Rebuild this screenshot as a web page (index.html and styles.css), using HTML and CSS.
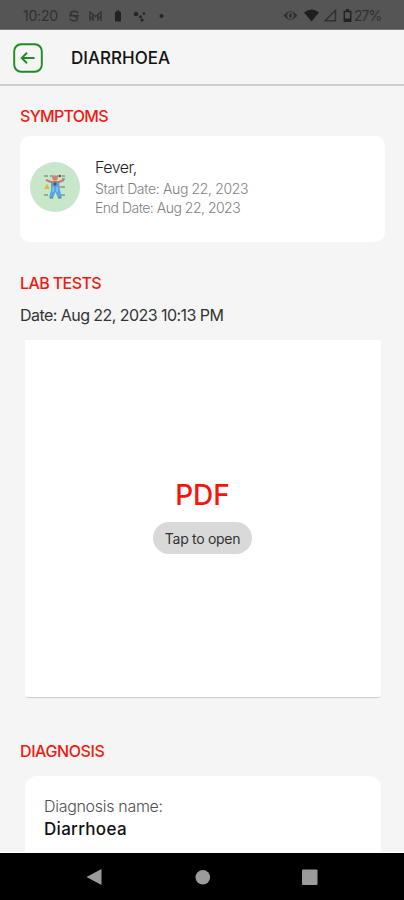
FILE: index.html
```html
<!DOCTYPE html>
<html lang="en">
<head>
<meta charset="utf-8">
<title>Diarrhoea</title>
<link rel="stylesheet" href="styles.css">
</head>
<body>
<div class="screen">
  <div class="status">
    <span class="time">10:20</span>
    <svg class="status-left" width="104" height="20" viewBox="66 6 104 20">
      <path d="M78 13.500C77.500 10.500 70.500 10.500 70.500 13.500C70.500 16.300 77.500 15.500 77.500 18.500C77.500 21.500 70.500 21.500 70 18.500M69 15.800H79" fill="none" stroke="#333" stroke-width="1.500"/>
      <path d="M90 21V12L95.500 16.500L101 12V21M93 21V15M98 21V15M90 16.500L93 19M101 16.500L98 19" fill="none" stroke="#353535" stroke-width="1.500"/>
      <path d="M116.500 10.500H119.500V12H121V21.500H115V12H116.500Z" fill="#222"/>
      <g fill="#252525"><circle cx="136" cy="14" r="2.300"/><circle cx="140.500" cy="16.800" r="1.500"/><circle cx="144" cy="13.500" r="1.200"/><circle cx="142" cy="20" r="1.600"/><circle cx="161.500" cy="16" r="2"/></g>
    </svg>
    <svg class="status-right" width="70" height="20" viewBox="282 6 70 20">
      <path d="M283.500 15.500Q290.500 7 297.500 15.500Q290.500 24 283.500 15.500Z" fill="#303030"/>
      <ellipse cx="290.500" cy="15.500" rx="3.300" ry="3.600" fill="#555"/><ellipse cx="290.500" cy="15.500" rx="1.300" ry="2.600" fill="#2b2b2b"/>
      <path d="M304 12.500Q311.500 6.500 319 12.500L311.500 21.500Z" fill="#1f1f1f"/>
      <path d="M325 20.800L335.500 10.500V20.800Z" fill="none" stroke="#303030" stroke-width="1.400"/>
      <path d="M344.300 11.500H350.700V21.200H344.300Z" fill="none" stroke="#222" stroke-width="1.500"/><path d="M346 9H349V11H346ZM344 18.500H351V21.500H344Z" fill="#222"/>
    </svg>
    <span class="battery">27%</span>
  </div>
  <header class="bar">
    <svg width="30" height="30" viewBox="0 0 30 30" fill="none" stroke="#1f8a24">
      <rect x="1.200" y="1.200" width="27.600" height="27.600" rx="7" stroke-width="1.900"/>
      <path d="M21.500 15H9M14 9.800L8.700 15L14 20.200" stroke-width="1.900"/>
    </svg>
    <h1>DIARRHOEA</h1>
  </header>
  <main>
    <h2 class="symptoms-title">SYMPTOMS</h2>
    <section class="card symptom">
      <div class="avatar">
        <svg width="24" height="26" viewBox="0 0 24 26">
          <path d="M8 7H16L17 16L19 24H15L12.500 18L10 24H6L8 16Z" fill="#5ba6df"/>
          <path d="M3 6L8 8L16 8L21 6" fill="none" stroke="#c97870" stroke-width="2"/>
          <circle cx="12" cy="4" r="2.800" fill="#dc7c70"/>
          <path d="M1 2H5M7 2H10M14 2H17M19 2H22M19 5H22M17 13H22M1 21H5M18 21H22M7 24H10M15 24H18" stroke="#61746b" stroke-width="1.200"/>
          <path d="M4 10L7 15H1Z" fill="#d7bd3c"/><circle cx="17" cy="2" r="1.200" fill="#b43242"/>
          <path d="M12 8L14 10L12 12L10 10Z" fill="#315aa0"/><path d="M10 13V18M14 13V18" stroke="#81c7ed" stroke-width="1.500"/>
        </svg>
      </div>
      <div>
        <p class="name">Fever,</p>
        <p class="date start">Start Date: Aug 22, 2023</p>
        <p class="date end">End Date: Aug 22, 2023</p>
      </div>
    </section>
    <h2 class="lab-title">LAB TESTS</h2>
    <p class="lab-date">Date: Aug 22, 2023 10:13 PM</p>
    <section class="pdf">
      <div class="pdf-label">PDF</div>
      <div class="open">Tap to open</div>
    </section>
    <h2 class="diagnosis-title">DIAGNOSIS</h2>
    <section class="card diagnosis">
      <p class="label">Diagnosis name:</p>
      <p class="value">Diarrhoea</p>
    </section>
  </main>
  <nav>
    <svg width="404" height="47" viewBox="0 853 404 47" fill="#9b9b9b">
      <path d="M86.500 877L101.500 869V885Z"/><circle cx="202.800" cy="877.300" r="7.300"/><rect x="302" y="869.500" width="15.500" height="15.500" rx="1"/>
    </svg>
  </nav>
</div>
</body>
</html>
```
FILE: styles.css
```css
* { box-sizing: border-box; margin: 0; padding: 0; }
body { background: #f5f5f5; font-family: Inter, "Liberation Sans", sans-serif; color: #222; }
.screen { width: 404px; height: 900px; display: flex; flex-direction: column; overflow: hidden; white-space: nowrap; }
.status { height: 30px; flex: none; display: flex; background: #555; padding: 6px 0 0 23px; border-bottom: 1px solid #777; color: #303030; line-height: 20px; }
.time { width: 43px; font-size: 14px; letter-spacing: -0.2px; }
.status-right { margin-left: 112px; }
.battery { margin-left: 2px; font-size: 14px; letter-spacing: -1px; }
.bar { height: 56px; flex: none; display: flex; align-items: center; padding: 1px 0 0 13px; gap: 28px; border-bottom: 2px solid #cdcfcd; }
h1 { font-size: 17px; line-height: 22px; padding-top: 1px; font-weight: 450; letter-spacing: 0; color: #111; }
main { height: 767px; flex: none; overflow: hidden; padding: 20px 19px 0 20px; border-bottom: 1px solid #fff; }
h2 { font-size: 16px; line-height: 20px; font-weight: 500; color: #f01a12; letter-spacing: -0.5px; }
.symptoms-title { letter-spacing: -0.7px; }
.card { background: #fff; border-radius: 10px; }
.symptom { margin-top: 10px; height: 106px; padding: 20px 10px; display: flex; gap: 15px; }
.avatar { width: 50px; height: 50px; margin-top: 6px; border-radius: 50%; background: #c8e6c9; display: flex; align-items: center; justify-content: center; }
.name { font-size: 16px; line-height: 23px; font-weight: 300; letter-spacing: -0.5px; color: #222; }
.date { font-size: 14px; line-height: 19px; font-weight: 300; color: #808080; }
.start { letter-spacing: -0.34px; }
.end { letter-spacing: -0.5px; }
.lab-title { margin-top: 31px; letter-spacing: -0.6px; }
.lab-date { margin-top: 11px; font-size: 16px; line-height: 22px; letter-spacing: -0.55px; color: #333; }
.pdf { margin: 14px 4px 0 5px; height: 357px; background: #fff; box-shadow: 0 2px 1px -1px #c8c8c8; border-radius: 1px 1px 3px 3px; display: flex; flex-direction: column; align-items: center; padding: 137px 1px 0 0; }
.pdf-label { font-size: 28px; line-height: 36px; font-weight: 500; color: #f5150f; }
.open { width: 99px; height: 32px; margin-top: 9px; border-radius: 16px; background: #d9d9d9; font-size: 14px; line-height: 33px; text-align: center; letter-spacing: -0.3px; color: #333; }
.diagnosis-title { margin-top: 44px; letter-spacing: -0.4px; }
.diagnosis { margin: 15px 4px 0 5px; height: 120px; padding: 19px; border-radius: 12px; }
.label { font-size: 16px; line-height: 22px; font-weight: 300; letter-spacing: -0.3px; color: #505050; }
.value { font-size: 17px; line-height: 25px; font-weight: 450; letter-spacing: 0.3px; color: #111; }
nav { height: 47px; flex: none; background: #000; }
svg { display: block; flex: none; }
```
